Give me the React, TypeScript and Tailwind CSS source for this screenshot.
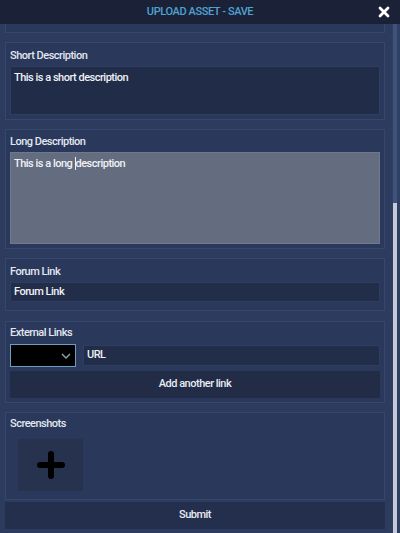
import React from "react";

const font = { fontFamily: "Roboto, 'Liberation Sans', sans-serif" };

function Card({ className = "", children }: { className?: string; children: React.ReactNode }) {
  return (
    <div className={`border border-[#36476d] bg-[#29385b] px-[4px] ${className}`}>{children}</div>
  );
}

function Label({ children }: { children: React.ReactNode }) {
  return <div className="text-[11px] leading-[13px] font-medium tracking-[-0.5px] text-[#e3e7ef]">{children}</div>;
}

export default function App() {
  return (
    <div className="w-[400px] h-[533px] bg-[#2c3b5e] flex flex-col overflow-hidden" style={font}>
      <div className="h-[24px] bg-[#1b2237] relative flex items-center justify-center shrink-0">
        <span className="text-[11px] font-medium tracking-[-0.4px] text-[#4fa2d2]">UPLOAD ASSET - SAVE</span>
        <svg className="absolute right-[10px] top-[6px]" width="12" height="12" viewBox="0 0 12 12">
          <path d="M2 2 L10 10 M10 2 L2 10" stroke="#ffffff" strokeWidth="2.8" strokeLinecap="round" />
        </svg>
      </div>
      <div className="flex flex-1 min-h-0">
        <div className="flex-1 flex flex-col pl-[5px] pr-[7px]">
          <div className="h-[9px] shrink-0 border-x border-b border-[#36476d] bg-[#29385b]" />
          <Card className="mt-[9px] pt-[6px] pb-[4px]">
            <Label>Short Description</Label>
            <div className="mt-[4px] h-[49px] bg-[#212c48] border border-[#2f3e60] px-[3px] pt-[3px] text-[11px] font-medium tracking-[-0.5px] text-[#eef1f6]">
              This is a short description
            </div>
          </Card>
          <Card className="mt-[9px] pt-[5px] pb-[4px]">
            <Label>Long Description</Label>
            <div className="mt-[4px] h-[92px] bg-[#646c80] border border-[#707890] px-[3px] pt-[3px] text-[11px] font-medium tracking-[-0.5px] text-[#f0f2f6]">
              This is a long <span className="border-l border-[#f0f2f6]">description</span>
            </div>
          </Card>
          <Card className="mt-[9px] pt-[6px] pb-[8px]">
            <Label>Forum Link</Label>
            <div className="mt-[4px] h-[20px] bg-[#222d49] border border-[#2f3e60] px-[3px] flex items-center text-[11px] font-medium tracking-[-0.5px] text-[#eef1f6]">
              Forum Link
            </div>
          </Card>
          <Card className="mt-[10px] pt-[4px] pb-[4px]">
            <Label>External Links</Label>
            <div className="mt-[5px] flex gap-[7px] items-center">
              <div className="w-[66px] h-[23px] bg-black border border-[#6b9ec4] flex items-center justify-end pr-[4px]">
                <svg width="10" height="6" viewBox="0 0 10 6">
                  <path d="M1 1 L5 5 L9 1" stroke="#8aa8a6" strokeWidth="1.4" fill="none" />
                </svg>
              </div>
              <div className="flex-1 h-[21px] bg-[#222d49] border border-[#2f3e60] px-[3px] flex items-center text-[11px] font-medium tracking-[-0.5px] text-[#eef1f6]">
                URL
              </div>
            </div>
            <div className="mt-[4px] h-[27px] bg-[#222c47] flex items-center justify-center text-[11px] font-medium tracking-[-0.5px] text-[#e8ebf2]">
              Add another link
            </div>
          </Card>
          <Card className="mt-[9px] pt-[4px] pb-[8px]">
            <Label>Screenshots</Label>
            <div className="mt-[9px] ml-[8px] w-[65px] h-[52px] bg-[#27324f] flex items-center justify-center">
              <svg width="28" height="28" viewBox="0 0 28 28">
                <path d="M14 3 V25 M3 14 H25" stroke="#000000" strokeWidth="6" strokeLinecap="round" />
              </svg>
            </div>
          </Card>
          <div className="mt-[2px] h-[27px] shrink-0 bg-[#232f4c] flex items-center justify-center text-[11px] font-medium tracking-[-0.5px] text-[#e8ebf2]">
            Submit
          </div>
        </div>
        <div className="w-[8px] flex flex-col bg-[#2f3f63] pl-[1px] pr-[3px]">
          <div className="h-[179px] bg-[#41527a]" />
          <div className="flex-1 bg-[#c4cad8]" />
        </div>
      </div>
    </div>
  );
}
